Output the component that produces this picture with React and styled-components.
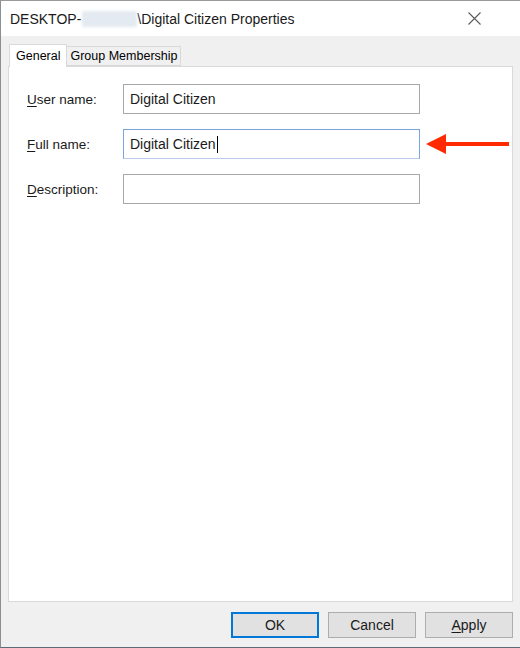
import React from "react";
import styled, { createGlobalStyle } from "styled-components";

const GlobalStyle = createGlobalStyle`
  html, body {
    margin: 0;
    padding: 0;
    background: #ffffff;
  }
  * {
    box-sizing: border-box;
  }
`;

const Window = styled.div`
  width: 520px;
  height: 648px;
  display: flex;
  flex-direction: column;
  border-top: 1px solid #9a9a9a;
  border-left: 1px solid #8a8f96;
  border-bottom: 1px solid #5d6b79;
  font-family: "Liberation Sans", Arial, sans-serif;
  color: #000;
  overflow: hidden;
`;

const TitleBar = styled.div`
  height: 35px;
  flex: none;
  display: flex;
  align-items: center;
  justify-content: space-between;
  background: #ffffff;
  padding: 0 39px 0 9px;
`;

const Title = styled.div`
  display: flex;
  align-items: center;
  font-size: 14px;
  color: #1a1a1a;
  white-space: nowrap;
`;

const Blurred = styled.span`
  display: inline-block;
  width: 55px;
  height: 16px;
  margin-left: 1px;
  background: #e4eaf1;
  filter: blur(1.5px);
  border-radius: 2px;
`;

const CloseIcon = styled.svg`
  width: 13px;
  height: 13px;
  display: block;
`;

const Body = styled.div`
  flex: 1;
  display: flex;
  flex-direction: column;
  background: #f0f0f0;
  padding: 8px 7px 0 7px;
`;

const TabRow = styled.div`
  display: flex;
  align-items: flex-end;
  height: 22px;
  padding-left: 1px;
  position: relative;
  z-index: 1;
`;

const Tab = styled.div`
  font-size: 12.5px;
  display: flex;
  align-items: center;
  padding: 0 ${(p) => (p.active ? "6px" : "3px")};
  height: ${(p) => (p.active ? "23px" : "20px")};
  margin-bottom: ${(p) => (p.active ? "-1px" : "0")};
  background: ${(p) => (p.active ? "#ffffff" : "#f0f0f0")};
  border: 1px solid #d9d9d9;
  border-bottom: ${(p) => (p.active ? "none" : "1px solid #d9d9d9")};
  border-left: ${(p) => (p.active ? "1px solid #d9d9d9" : "none")};
  color: #000;
`;

const Panel = styled.div`
  flex: 1;
  background: #ffffff;
  border: 1px solid #d9d9d9;
  padding: 17px 0 0 17px;
  display: flex;
  flex-direction: column;
  gap: 15px;
`;

const FieldRow = styled.div`
  display: flex;
  align-items: center;
  position: relative;
`;

const Label = styled.label`
  width: 97px;
  font-size: 13.5px;
  color: #1a1a1a;
  padding-left: 1px;
`;

const Key = styled.span`
  text-decoration: underline;
  text-underline-offset: 2px;
`;

const Input = styled.div`
  width: 297px;
  height: 30px;
  display: flex;
  align-items: center;
  padding-left: 6px;
  font-size: 14px;
  color: #1a1a1a;
  background: #ffffff;
  border: 1px solid ${(p) => (p.focused ? "#7aa4dc" : "#a8a8a8")};
  border-bottom-color: ${(p) => (p.focused ? "#b9cdea" : "#a8a8a8")};
`;

const Caret = styled.span`
  display: inline-block;
  width: 1px;
  height: 17px;
  background: #000;
  margin-left: 1px;
`;

const Arrow = styled.svg`
  position: absolute;
  left: 400px;
  top: 50%;
  transform: translateY(-50%);
  width: 83px;
  height: 22px;
`;

const Footer = styled.div`
  height: 45px;
  flex: none;
  display: flex;
  align-items: center;
  justify-content: flex-end;
  gap: 9px;
`;

const Button = styled.button`
  width: 88px;
  height: 26px;
  font-family: "Liberation Sans", Arial, sans-serif;
  font-size: 14px;
  color: #1a1a1a;
  background: #e1e1e1;
  border: ${(p) => (p.primary ? "2px solid #0078d7" : "1px solid #adadad")};
  padding: 0;
`;

const fields = [
  { key: "U", rest: "ser name:", value: "Digital Citizen" },
  { key: "F", rest: "ull name:", value: "Digital Citizen", focused: true },
  { key: "D", rest: "escription:", value: "" },
];

const App = () => (
  <>
    <GlobalStyle />
    <Window>
      <TitleBar>
        <Title>
          DESKTOP-<Blurred />\Digital Citizen Properties
        </Title>
        <CloseIcon viewBox="0 0 13 13">
          <path d="M0.5 0.5 L12.5 12.5 M12.5 0.5 L0.5 12.5" stroke="#5a5a5a" strokeWidth="1.1" fill="none" />
        </CloseIcon>
      </TitleBar>
      <Body>
        <TabRow>
          <Tab active>General</Tab>
          <Tab>Group Membership</Tab>
        </TabRow>
        <Panel>
          {fields.map((f) => (
            <FieldRow key={f.key}>
              <Label>
                <Key>{f.key}</Key>
                {f.rest}
              </Label>
              <Input focused={f.focused}>
                {f.value}
                {f.focused && <Caret />}
              </Input>
              {f.focused && (
                <Arrow viewBox="0 0 83 22">
                  <polygon points="0,11 20,1 20,21" fill="#ff2a00" />
                  <rect x="19" y="9" width="64" height="4" fill="#ff2a00" />
                </Arrow>
              )}
            </FieldRow>
          ))}
        </Panel>
        <Footer>
          <Button primary>OK</Button>
          <Button>Cancel</Button>
          <Button>
            <Key>A</Key>pply
          </Button>
        </Footer>
      </Body>
    </Window>
  </>
);

export default App;
